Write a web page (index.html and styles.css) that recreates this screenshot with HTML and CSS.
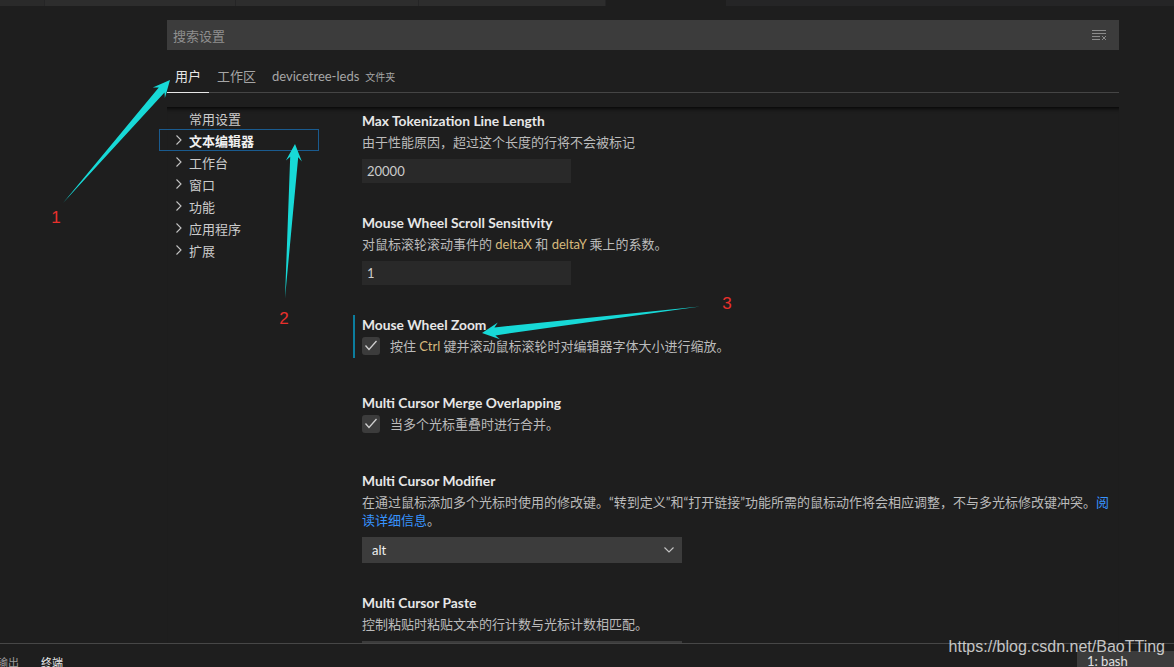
FILE: index.html
```html
<!DOCTYPE html>
<html lang="zh-CN">
<head>
<meta charset="utf-8">
<title>设置</title>
<link rel="stylesheet" href="styles.css">
</head>
<body>
<div class="app">
  <div class="editor-tabs">
    <div class="etab etab-1"></div>
    <div class="etab etab-2"></div>
    <div class="etab etab-3"></div>
    <div class="etab etab-4"></div>
    <div class="etab etab-active"></div>
  </div>

  <div class="main">
    <div class="settings">
      <div class="search">
        <span class="search-placeholder">搜索设置</span>
        <svg class="clear-icon" width="16" height="16" viewBox="0 0 16 16">
          <g stroke="#8b8b8b" stroke-width="1" fill="none">
            <line x1="0" y1="2.5" x2="14" y2="2.5"/>
            <line x1="0" y1="5.5" x2="14" y2="5.5"/>
            <line x1="0" y1="8.5" x2="8" y2="8.5"/>
            <line x1="0" y1="11.5" x2="8" y2="11.5"/>
            <line x1="10" y1="8" x2="14" y2="12"/>
            <line x1="14" y1="8" x2="10" y2="12"/>
          </g>
        </svg>
      </div>

      <div class="scope-tabs">
        <div class="scope-tab active">用户</div>
        <div class="scope-tab">工作区</div>
        <div class="scope-tab">devicetree-leds<span class="scope-hint">文件夹</span></div>
      </div>

      <div class="settings-body">
        <nav class="toc">
          <div class="toc-row"><span class="toc-twisty"></span><span>常用设置</span></div>
          <div class="toc-row selected"><svg class="toc-twisty" width="14" height="14" viewBox="0 0 14 14"><polyline points="1.5,2.5 6,7 1.5,11.5" fill="none" stroke="#c5c5c5" stroke-width="1.1"/></svg><span>文本编辑器</span></div>
          <div class="toc-row"><svg class="toc-twisty" width="14" height="14" viewBox="0 0 14 14"><polyline points="1.5,2.5 6,7 1.5,11.5" fill="none" stroke="#c5c5c5" stroke-width="1.1"/></svg><span>工作台</span></div>
          <div class="toc-row"><svg class="toc-twisty" width="14" height="14" viewBox="0 0 14 14"><polyline points="1.5,2.5 6,7 1.5,11.5" fill="none" stroke="#c5c5c5" stroke-width="1.1"/></svg><span>窗口</span></div>
          <div class="toc-row"><svg class="toc-twisty" width="14" height="14" viewBox="0 0 14 14"><polyline points="1.5,2.5 6,7 1.5,11.5" fill="none" stroke="#c5c5c5" stroke-width="1.1"/></svg><span>功能</span></div>
          <div class="toc-row"><svg class="toc-twisty" width="14" height="14" viewBox="0 0 14 14"><polyline points="1.5,2.5 6,7 1.5,11.5" fill="none" stroke="#c5c5c5" stroke-width="1.1"/></svg><span>应用程序</span></div>
          <div class="toc-row"><svg class="toc-twisty" width="14" height="14" viewBox="0 0 14 14"><polyline points="1.5,2.5 6,7 1.5,11.5" fill="none" stroke="#c5c5c5" stroke-width="1.1"/></svg><span>扩展</span></div>
        </nav>

        <div class="setting-list">
          <div class="setting">
            <div class="setting-title">Max Tokenization Line Length</div>
            <div class="setting-desc">由于性能原因，超过这个长度的行将不会被标记</div>
            <div class="num-input">20000</div>
          </div>

          <div class="setting">
            <div class="setting-title">Mouse Wheel Scroll Sensitivity</div>
            <div class="setting-desc">对鼠标滚轮滚动事件的 <span class="code">deltaX</span> 和 <span class="code">deltaY</span> 乘上的系数。</div>
            <div class="num-input">1</div>
          </div>

          <div class="setting bool modified">
            <div class="setting-title">Mouse Wheel Zoom</div>
            <div class="check-row">
              <span class="checkbox"><svg width="18" height="18" viewBox="0 0 18 18"><polyline points="3.5,8.5 7,12.5 14.5,4" fill="none" stroke="#d0d0d0" stroke-width="1.3"/></svg></span>
              <span class="check-label">按住 <span class="code">Ctrl</span> 键并滚动鼠标滚轮时对编辑器字体大小进行缩放。</span>
            </div>
          </div>

          <div class="setting bool">
            <div class="setting-title">Multi Cursor Merge Overlapping</div>
            <div class="check-row">
              <span class="checkbox"><svg width="18" height="18" viewBox="0 0 18 18"><polyline points="3.5,8.5 7,12.5 14.5,4" fill="none" stroke="#d0d0d0" stroke-width="1.3"/></svg></span>
              <span class="check-label">当多个光标重叠时进行合并。</span>
            </div>
          </div>

          <div class="setting">
            <div class="setting-title">Multi Cursor Modifier</div>
            <div class="setting-desc">在通过鼠标添加多个光标时使用的修改键。“转到定义”和“打开链接”功能所需的鼠标动作将会相应调整，不与多光标修改键冲突。<span class="link">阅<br>读详细信息</span>。</div>
            <div class="select"><span>alt</span><svg width="10" height="6" viewBox="0 0 10 6"><polyline points="0.5,0.5 5,5 9.5,0.5" fill="none" stroke="#c5c5c5" stroke-width="1.1"/></svg></div>
          </div>

          <div class="setting">
            <div class="setting-title">Multi Cursor Paste</div>
            <div class="setting-desc">控制粘贴时粘贴文本的行计数与光标计数相匹配。</div>
            <div class="select"></div>
          </div>
        </div>
      </div>
    </div>
  </div>

  <div class="panel">
    <div class="panel-tabs">
      <span class="panel-tab">输出</span>
      <span class="panel-tab active">终端</span>
    </div>
    <div class="terminal-select">1: bash</div>
  </div>
</div>

<div class="watermark">https://blog.csdn.net/BaoTTing</div>

<svg class="annotations" width="1174" height="667" viewBox="0 0 1174 667">
  <g fill="#17d9d7">
    <polygon points="63,203 158.8,87.4 152.8,87.6 170,80 164.9,98.1 164.5,92.4"/>
    <polygon points="285,298 290.2,156.7 285.9,160.5 295,144 301.9,161.5 298.2,157.2"/>
    <polygon points="700,306.5 494.4,327.4 497.8,322.5 482,333 499.9,339.3 495.4,335.4"/>
  </g>
  <g class="anno-label" fill="#e8302c">
    <text x="56" y="222.5" text-anchor="middle">1</text>
    <text x="284" y="324" text-anchor="middle">2</text>
    <text x="727" y="309" text-anchor="middle">3</text>
  </g>
</svg>
</body>
</html>
```

FILE: styles.css
```css
html, body {
  margin: 0;
  padding: 0;
  background: #1e1e1e;
}

body {
  width: 1174px;
  height: 667px;
  overflow: hidden;
  position: relative;
  font-family: Lato, "Noto Sans CJK SC", sans-serif;
  font-size: 13px;
  color: #cccccc;
}

.app {
  display: flex;
  flex-direction: column;
  width: 1174px;
  height: 667px;
}

/* editor tab strip (only its lower edge is visible) */
.editor-tabs {
  display: flex;
  height: 6px;
  flex-shrink: 0;
  background: #252526;
}
.etab {
  height: 6px;
  background: #2d2d2d;
  box-sizing: border-box;
  border-right: 1px solid #252526;
}
.etab-1 { width: 45px; background: #2a2a2a; }
.etab-2 { width: 191px; }
.etab-3 { width: 183px; }
.etab-4 { width: 187px; }
.etab-active { width: 120px; background: #1e1e1e; border-right: none; }

.main {
  flex: 1;
  min-height: 0;
  overflow: hidden;
}

.settings {
  margin-left: 167px;
  width: 952px;
}

/* search */
.search {
  margin-top: 14px;
  height: 30px;
  background: #3c3c3c;
  display: flex;
  align-items: center;
  justify-content: space-between;
  padding: 0 11px 0 6px;
}
.search-placeholder {
  color: #8f8f8f;
  font-size: 13px;
}
.clear-icon {
  display: block;
  margin-top: 1px;
}

/* scope tabs */
.scope-tabs {
  margin-top: 10px;
  display: flex;
  border-bottom: 1px solid #454545;
}
.scope-tab {
  padding: 6px 8px;
  height: 20px;
  line-height: 20px;
  color: #a6a6a6;
  border-bottom: 1px solid transparent;
  margin-bottom: -1px;
}
.scope-tab.active {
  color: #e7e7e7;
  border-bottom-color: #e7e7e7;
}
.scope-hint {
  font-size: 10px;
  line-height: 1;
  margin-left: 6px;
  color: #a6a6a6;
}

/* body */
.settings-body {
  margin-top: 14px;
  display: flex;
  box-shadow: inset 0 6px 5px -5px #000;
  height: 540px;
}

.toc {
  width: 160px;
  margin-left: -8px;
  flex-shrink: 0;
}
.toc-row {
  height: 22px;
  box-sizing: border-box;
  border: 1px solid transparent;
  padding-left: 15px;
  display: flex;
  align-items: center;
  color: #cccccc;
}
.toc-row.selected {
  border-color: #1a5b8f;
  color: #f0f0f0;
  font-weight: 700;
}
.toc-twisty {
  width: 14px;
  height: 14px;
  flex-shrink: 0;
  display: block;
}

.setting-list {
  flex: 1;
  margin-left: 34px;
  padding-top: 4px;
}

.setting {
  border-left: 2px solid transparent;
  padding-left: 7px;
  margin-bottom: 30px;
}
.setting.bool {
  margin-bottom: 35px;
}
.setting.modified {
  border-left-color: #0c7d9d;
}

.setting-title {
  font-weight: 700;
  font-size: 13.8px;
  line-height: 20px;
  color: #e7e7e7;
}
.setting-desc {
  margin-top: 2px;
  line-height: 18px;
  color: #bbbbbb;
}
.code {
  color: #d7ba7d;
}
.link {
  color: #3794ff;
}

.num-input {
  margin-top: 8px;
  width: 209px;
  height: 24px;
  line-height: 24px;
  box-sizing: border-box;
  padding-left: 5px;
  background: #292929;
  color: #cccccc;
}

.select {
  margin-top: 8px;
  width: 320px;
  height: 26px;
  box-sizing: border-box;
  padding: 0 8px 0 10px;
  background: #3c3c3c;
  color: #f0f0f0;
  display: flex;
  align-items: center;
  justify-content: space-between;
}
.select svg {
  display: block;
}

.check-row {
  margin-top: 2px;
  padding-bottom: 3px;
  display: flex;
  align-items: center;
}
.checkbox {
  width: 18px;
  height: 18px;
  border-radius: 3px;
  background: #3c3c3c;
  flex-shrink: 0;
}
.checkbox svg {
  display: block;
}
.check-label {
  margin-left: 10px;
  line-height: 18px;
  color: #bbbbbb;
}

/* bottom panel */
.panel {
  height: 24px;
  flex-shrink: 0;
  box-sizing: border-box;
  border-top: 1px solid #474747;
  overflow: hidden;
  display: flex;
  align-items: flex-start;
}
.panel-tabs {
  height: 35px;
  display: flex;
  align-items: center;
  gap: 22px;
  margin-left: -3px;
  flex-shrink: 0;
}
.panel-tab {
  font-size: 11px;
  color: #9a9a9a;
}
.panel-tab.active {
  color: #e7e7e7;
}
.terminal-select {
  margin-left: auto;
  margin-top: 7px;
  width: 97px;
  height: 16px;
  line-height: 20px;
  box-sizing: border-box;
  padding-left: 10px;
  background: #3c3c3c;
  color: #e0e0e0;
  flex-shrink: 0;
}

/* overlays */
.watermark {
  position: absolute;
  right: 9px;
  top: 638px;
  line-height: 18px;
  font-family: "Liberation Sans", Arial, sans-serif;
  font-size: 16px;
  color: rgba(235, 235, 235, 0.82);
  white-space: nowrap;
}

.annotations {
  position: absolute;
  left: 0;
  top: 0;
  pointer-events: none;
}
.anno-label {
  font-family: "Liberation Sans", Arial, sans-serif;
  font-size: 17px;
}
```
